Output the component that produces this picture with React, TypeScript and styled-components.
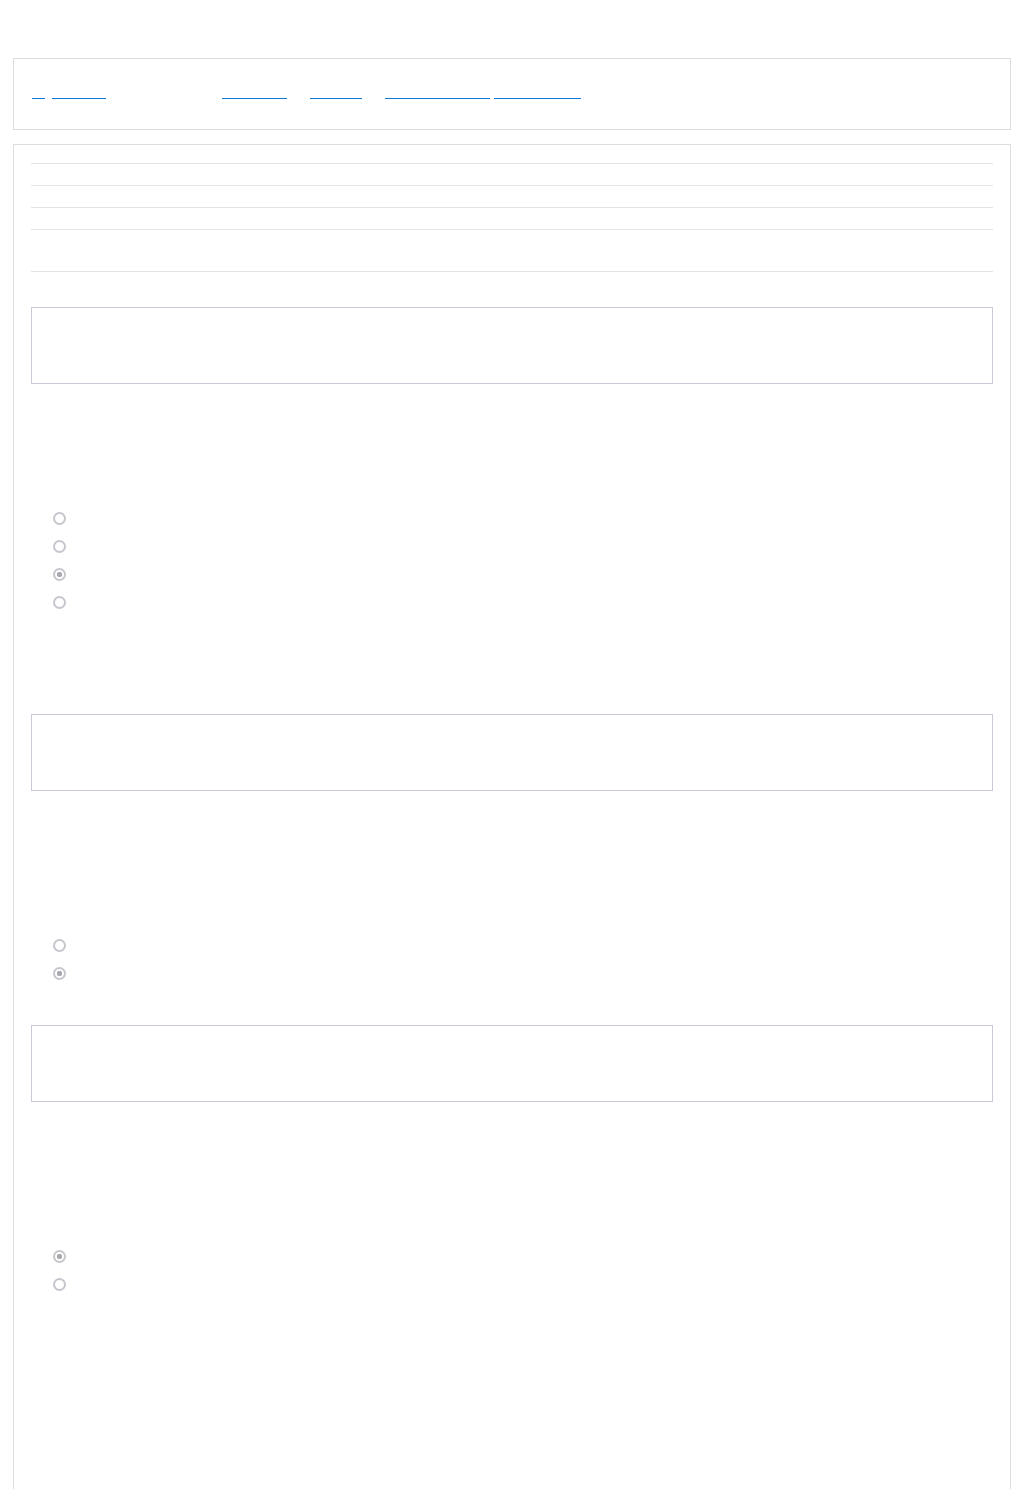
import React from "react";
import styled, { createGlobalStyle } from "styled-components";

/**
 * Read-only view of a submitted survey: a nav bar, the submission details
 * and each question with its chosen answer and comment.
 */

type QuestionData = {
  id: string;
  title: string;
  prompt: string[];
  options: string[];
  answer: number;
  feedback?: string[];
  comment?: string;
};

const details: [string, string][] = [
  ["Respondent", "Anonymous participant #2381"],
  ["Submitted", "12 March 2024, 14:32"],
  ["Duration", "6 minutes 41 seconds"],
  [
    "Status",
    "Completed. All required questions were answered and the submission was reviewed by the survey owner.",
  ],
];

const questions: QuestionData[] = [
  {
    id: "q1",
    title: "Question 1",
    prompt: [
      "How satisfied are you with the support you received?",
      "Pick the option that best describes your overall experience.",
    ],
    options: ["Very dissatisfied", "Dissatisfied", "Satisfied", "Very satisfied"],
    answer: 2,
    feedback: [
      "This answer is used to compute the satisfaction score shown on the statistics page.",
      "Answers are weighted equally across all respondents.",
    ],
    comment: "The agent was friendly and solved the issue on the first call.",
  },
  {
    id: "q2",
    title: "Question 2",
    prompt: [
      "Would you contact our support team again?",
      "Only one answer can be chosen.",
      "This question is required.",
    ],
    options: ["No", "Yes"],
    answer: 1,
    comment: "Yes, the response time was short.",
  },
  {
    id: "q3",
    title: "Question 3",
    prompt: [
      "Did you find the answer in our help center before contacting us?",
      "Only one answer can be chosen.",
      "This question is optional.",
    ],
    options: ["Yes", "No"],
    answer: 0,
    feedback: [
      "Respondents who answered yes are asked for the article they used.",
      "No article was given for this submission.",
    ],
  },
];

function Question({ q }: { q: QuestionData }) {
  return (
    <QuestionBlock>
      <QuestionTitle>{q.title}</QuestionTitle>
      {q.prompt.map((line) => (
        <Line key={line}>{line}</Line>
      ))}
      <Options>
        {q.options.map((opt, i) => (
          <Option key={opt}>
            <Radio type="radio" name={q.id} disabled defaultChecked={i === q.answer} />
            <OptionText>{opt}</OptionText>
          </Option>
        ))}
      </Options>
      {q.feedback && (
        <Feedback>
          {q.feedback.map((line) => (
            <Line key={line}>{line}</Line>
          ))}
        </Feedback>
      )}
      {q.comment && (
        <>
          <FieldLabel>Comment</FieldLabel>
          <TextBox readOnly value={q.comment} />
        </>
      )}
    </QuestionBlock>
  );
}

function App() {
  return (
    <Page>
      <GlobalStyle />
      <PageTitle>Customer support survey</PageTitle>
      <Nav>
        <NavLink href="#">←</NavLink>
        <NavLink href="#" $gap={7}>
          Overview
        </NavLink>
        <NavTitle>Feedback 2024</NavTitle>
        <NavLink href="#">Responses</NavLink>
        <NavLink href="#" $gap={23}>
          Statistics
        </NavLink>
        <NavLink href="#" $gap={23}>
          Download as CSV
        </NavLink>{" "}
        <NavLink href="#">Export to Excel</NavLink>
      </Nav>
      <Panel>
        <Details>
          {details.map(([k, v]) => (
            <DetailRow key={k}>
              <DetailKey>{k}</DetailKey>
              <DetailValue>{v}</DetailValue>
            </DetailRow>
          ))}
        </Details>
        <FieldLabel $top={15}>Notes</FieldLabel>
        <TextBox readOnly value="Submitted through the link in the follow-up email." />
        {questions.map((q) => (
          <Question key={q.id} q={q} />
        ))}
        <QuestionBlock>
          <QuestionTitle>Summary</QuestionTitle>
          <Line>Overall score: 4 of 5.</Line>
          <Line>This submission is included in the weekly report.</Line>
          <Line>Last updated 12 March 2024 by the survey owner.</Line>
        </QuestionBlock>
      </Panel>
    </Page>
  );
}

export default App;

const GlobalStyle = createGlobalStyle`
  body {
    margin: 0;
    background: #ffffff;
    font-family: "Liberation Sans", Arial, sans-serif;
    font-size: 13px;
    line-height: 20px;
    color: transparent;
  }
`;

const Page = styled.div`
  padding: 13px 13px 0;
`;

const PageTitle = styled.h1`
  margin: 0 0 15px;
  font-size: 20px;
  line-height: 30px;
  font-weight: 600;
`;

const Nav = styled.nav`
  border: 1px solid #dddddd;
  padding: 24px 18px 25px;
  line-height: 21px;
  white-space: nowrap;
`;

/* the link text is hidden, only its blue underline shows */
const NavLink = styled.a<{ $gap?: number }>`
  margin-left: ${(p) => p.$gap ?? 0}px;
  color: transparent;
  text-decoration: none;
  background-image: linear-gradient(#0b78d6, #0b78d6);
  background-repeat: no-repeat;
  background-size: 100% 1px;
  background-position: 0 calc(100% - 2px);
`;

const NavTitle = styled.span`
  margin: 0 13px;
`;

const Panel = styled.main`
  margin-top: 14px;
  border: 1px solid #dddddd;
  padding: 18px 17px 60px;
`;

const Details = styled.dl`
  margin: 0;
  border-bottom: 1px solid #e4e4e4;
`;

const DetailRow = styled.div`
  display: grid;
  grid-template-columns: 180px 1fr;
  border-top: 1px solid #e4e4e4;
  padding-top: 1px;
`;

const DetailKey = styled.dt`
  font-weight: bold;
`;

const DetailValue = styled.dd`
  margin: 0;
  max-width: 560px;
`;

const FieldLabel = styled.div<{ $top?: number }>`
  margin-top: ${(p) => p.$top ?? 18}px;
  line-height: 20px;
`;

const TextBox = styled.textarea`
  display: block;
  box-sizing: border-box;
  width: 100%;
  height: 77px;
  margin: 0;
  padding: 6px 8px;
  border: 1px solid #c9ccd6;
  border-radius: 0;
  background: #ffffff;
  color: transparent;
  font: inherit;
  resize: none;
  outline: none;
`;

const QuestionBlock = styled.section`
  padding-top: 30px;
`;

const QuestionTitle = styled.h3`
  margin: 0 0 6px;
  font-size: 16px;
  line-height: 24px;
`;

const Line = styled.p`
  margin: 0;
  line-height: 20px;
`;

const Options = styled.ul`
  list-style: none;
  margin: 20px 0 0;
  padding: 0 0 0 22px;
`;

const Option = styled.li`
  display: flex;
  align-items: center;
  height: 28px;
`;

const Radio = styled.input`
  appearance: none;
  box-sizing: border-box;
  width: 13px;
  height: 13px;
  margin: 0;
  border: 2px solid #c6c6cd;
  border-radius: 50%;
  background: #ffffff;

  &:checked {
    background: radial-gradient(circle, #a9a9b1 0 2.4px, #ffffff 3px);
  }
`;

const OptionText = styled.span`
  margin-left: 9px;
`;

const Feedback = styled.div`
  margin-top: 20px;
`;
